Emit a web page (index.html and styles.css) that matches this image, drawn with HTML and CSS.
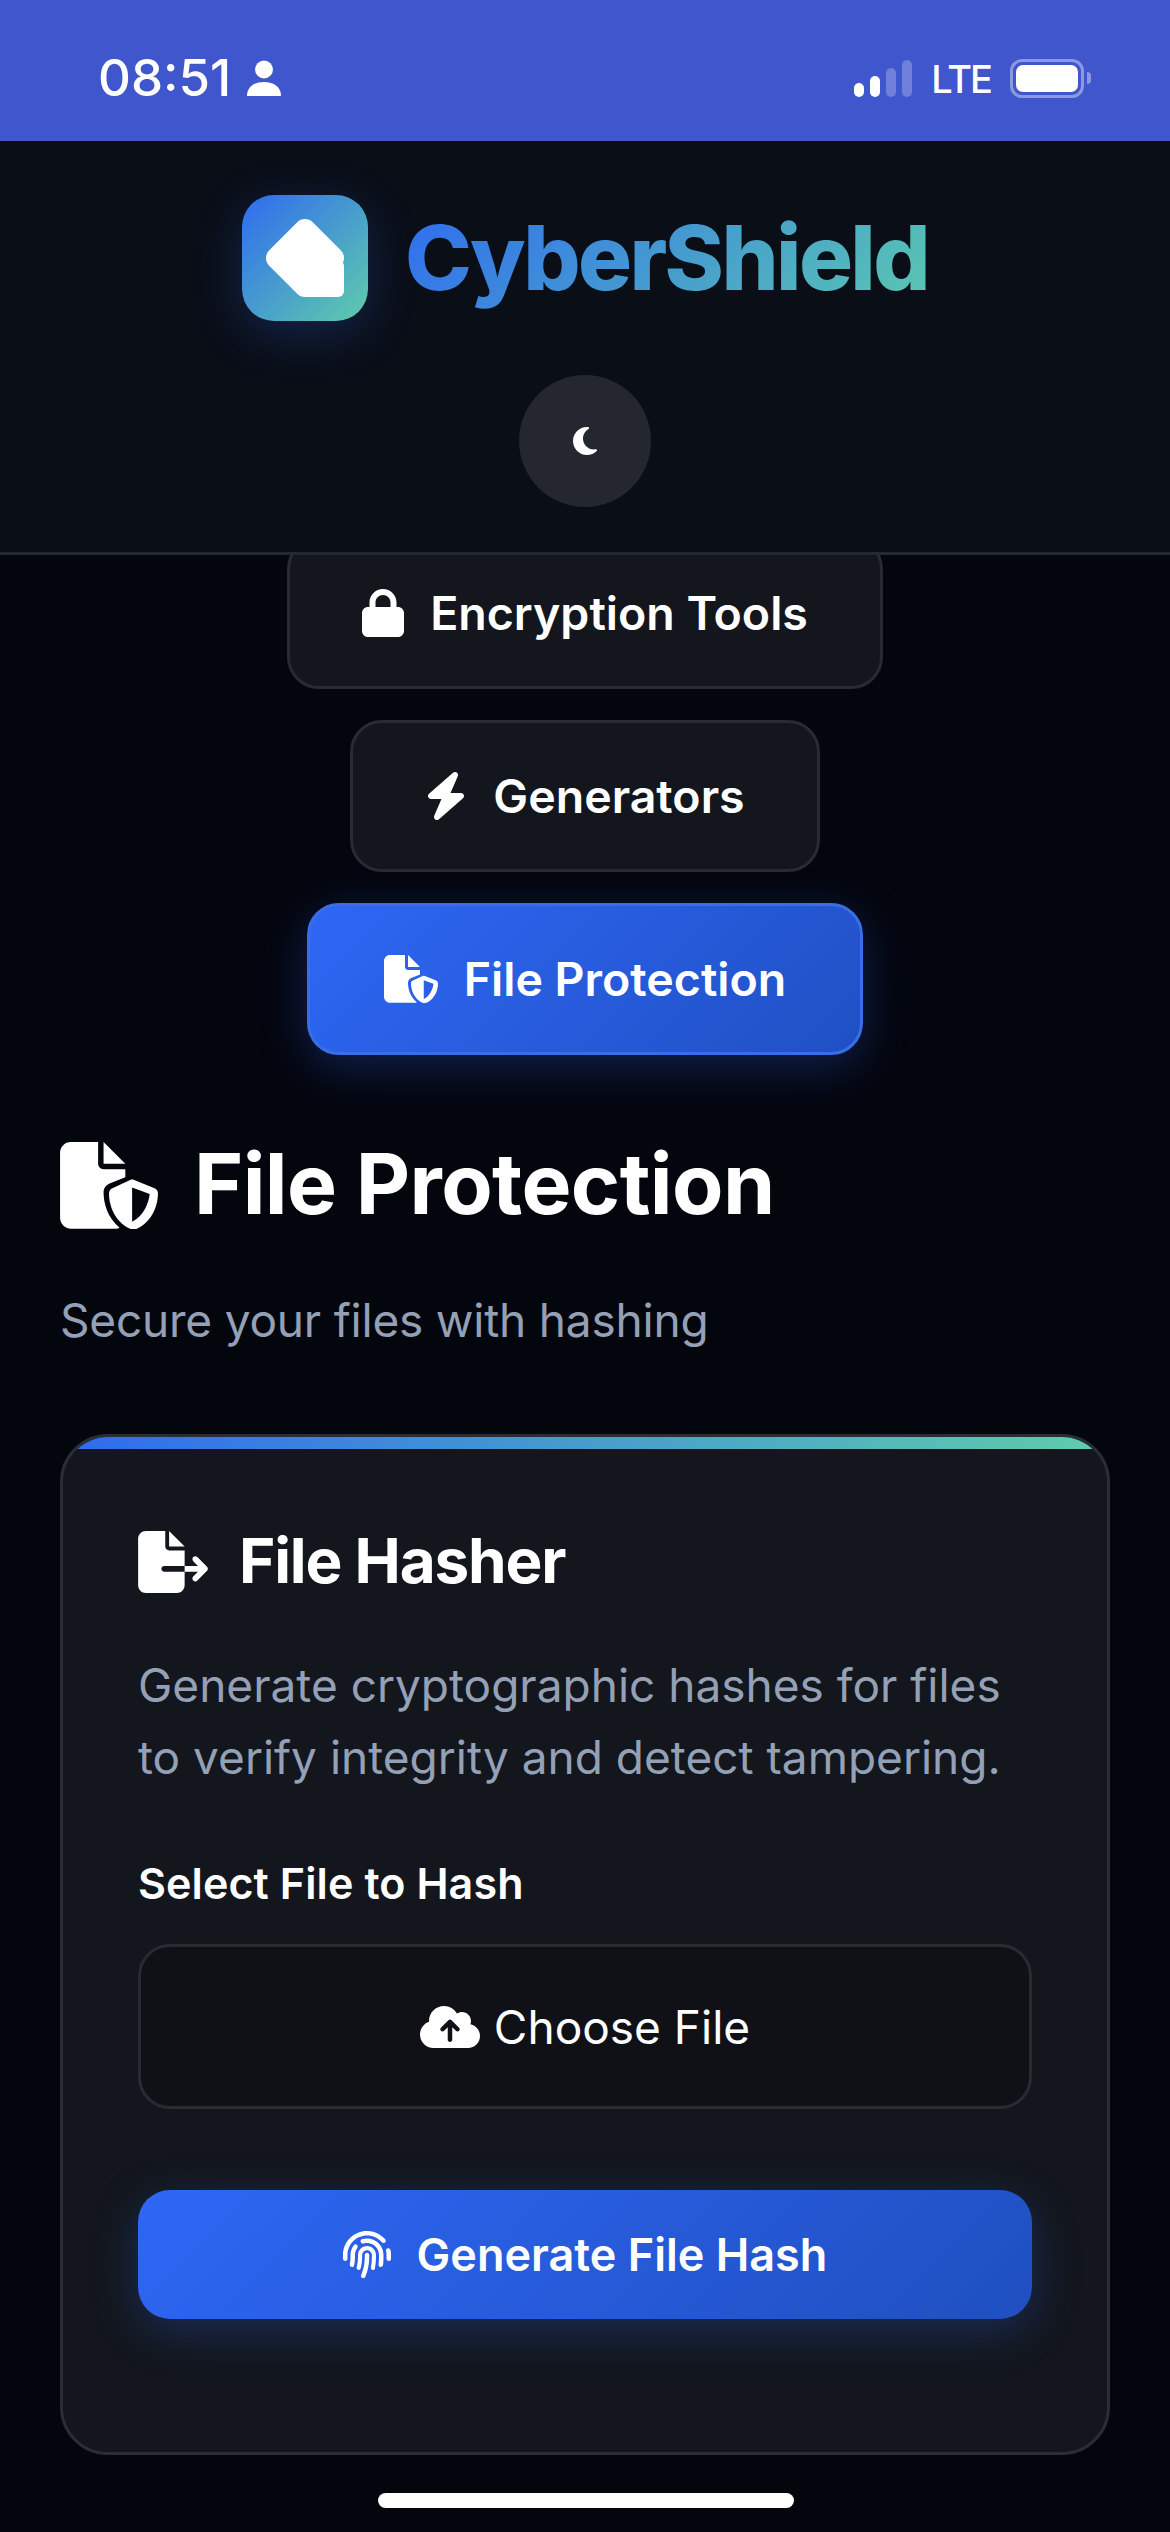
FILE: index.html
```html
<!DOCTYPE html>
<html lang="en">

<head>
    <meta charset="UTF-8">
    <meta name="viewport" content="width=device-width, initial-scale=1.0">
    <title>CyberShield</title>
    <link rel="stylesheet" href="styles.css">
</head>

<body>
    <div class="status-bar">
        <div class="status-left">
            <span class="time">08:51</span>
            <svg class="person" viewBox="0 0 34 36"><circle cx="17" cy="9.5" r="9"/><path d="M0 36c0-9 7-14 17-14s17 5 17 14z"/></svg>
        </div>
        <div class="status-right">
            <div class="signal">
                <span class="bar bar1"></span>
                <span class="bar bar2"></span>
                <span class="bar bar3 dim"></span>
                <span class="bar bar4 dim"></span>
            </div>
            <span class="lte">LTE</span>
            <div class="battery">
                <div class="battery-body"><div class="battery-fill"></div></div>
                <div class="battery-cap"></div>
            </div>
        </div>
    </div>

    <header class="site-header">
        <div class="brand">
            <div class="logo">
                <svg viewBox="0 0 78 78"><path d="M39 11 L67 39 L39 67 L11 39 Z" stroke="#fff" stroke-width="22" stroke-linejoin="round" fill="#fff"/><rect x="36" y="41" width="42" height="37" rx="6" fill="#fff"/></svg>
            </div>
            <span class="brand-name">CyberShield</span>
        </div>
        <button class="theme-toggle">
            <svg viewBox="0 0 384 512"><path d="M223.5 32C100 32 0 132.3 0 256S100 480 223.5 480c60.6 0 115.5-24.2 155.8-63.4c5-4.9 6.3-12.5 3.1-18.7s-10.1-9.7-17-8.5c-9.8 1.7-19.8 2.6-30.1 2.6c-96.9 0-175.5-78.8-175.5-176c0-65.8 36-123.1 89.3-153.3c6.1-3.5 9.2-10.5 7.7-17.3s-7.3-11.9-14.3-12.5c-6.3-.5-12.6-.8-19-.8z"/></svg>
        </button>
    </header>

    <main class="content">
        <nav class="tabs">
            <button class="tab">
                <svg class="tab-icon" viewBox="0 0 448 512"><path d="M144 144v48H304V144c0-44.2-35.8-80-80-80s-80 35.8-80 80zM80 192V144C80 64.5 144.5 0 224 0s144 64.5 144 144v48h16c35.3 0 64 28.7 64 64V448c0 35.3-28.7 64-64 64H64c-35.3 0-64-28.7-64-64V256c0-35.3 28.7-64 64-64H80z"/></svg>
                Encryption Tools
            </button>
            <button class="tab">
                <svg class="tab-icon" viewBox="0 0 448 512"><path d="M349.4 44.6c5.9-13.7 1.5-29.7-10.6-38.5s-28.6-8-39.9 1.8l-256 224c-10 8.8-13.6 22.9-8.9 35.3S50.7 288 64 288H175.5L98.6 467.4c-5.9 13.7-1.5 29.7 10.6 38.5s28.6 8 39.9-1.8l256-224c10-8.8 13.6-22.9 8.9-35.3s-16.6-20.7-30-20.7H272.5L349.4 44.6z"/></svg>
                Generators
            </button>
            <button class="tab active">
                <svg class="tab-icon" viewBox="0 0 576 512"><path fill-rule="evenodd" d="M0 64C0 28.7 28.7 0 64 0H224V128c0 17.7 14.3 32 32 32H384v47l-92.8 37.1c-21.3 8.5-35.2 29.1-35.2 52c0 56.6 18.9 148 94.2 208c-6.4 3-13.200 5.900-20.200 5.900H64c-35.300 0-64-28.700-64-64V64zM384 128H256V0L384 128zM412.400 223.500c7.600-3 16.100-3 23.800 0l120 48C568.100 276.400 576 288 576 301c0 63.300-25.900 168.800-134.800 214.200c-5.900 2.500-12.600 2.500-18.500 0C313.900 469.800 288 364.300 288 301c0-13 7.900-24.600 20-29.500l104.400-48zM424 268V469.500c69.600-36.300 98-112.300 103.400-164L424 268z"/></svg>
                File Protection
            </button>
        </nav>

        <h1 class="page-title">
            <svg class="title-icon" viewBox="0 0 576 512"><path fill-rule="evenodd" d="M0 64C0 28.7 28.7 0 64 0H224V128c0 17.7 14.3 32 32 32H384v47l-92.8 37.1c-21.3 8.5-35.2 29.1-35.2 52c0 56.6 18.9 148 94.2 208c-6.400 3-13.200 5.900-20.200 5.900H64c-35.300 0-64-28.700-64-64V64zM384 128H256V0L384 128zM412.400 223.500c7.600-3 16.100-3 23.800 0l120 48C568.100 276.400 576 288 576 301c0 63.300-25.900 168.800-134.800 214.200c-5.900 2.500-12.600 2.500-18.500 0C313.900 469.800 288 364.300 288 301c0-13 7.900-24.600 20-29.500l104.400-48zM424 268V469.500c69.600-36.300 98-112.300 103.400-164L424 268z"/></svg>
            <span class="title-text">File Protection</span>
        </h1>
        <p class="page-sub">Secure your files with hashing</p>

        <section class="card">
            <div class="card-stripe"></div>
            <div class="card-body">
                <h2 class="card-title">
                    <svg class="card-icon" viewBox="0 0 576 512"><path d="M0 64C0 28.700 28.700 0 64 0H224V128c0 17.700 14.300 32 32 32H384V288H216c-13.300 0-24 10.700-24 24s10.700 24 24 24H384V448c0 35.300-28.700 64-64 64H64c-35.300 0-64-28.700-64-64V64zM384 336V288H494.100l-39-39c-9.400-9.400-9.400-24.600 0-33.900s24.600-9.400 33.900 0l80 80c9.400 9.400 9.400 24.600 0 33.900l-80 80c-9.400 9.400-24.600 9.400-33.900 0s-9.400-24.600 0-33.900l39-39H384zm0-208H256V0L384 128z"/></svg>
                    <span class="title-text">File Hasher</span>
                </h2>
                <p class="card-desc">Generate cryptographic hashes for files to verify integrity and detect tampering.</p>
                <div class="field-label">Select File to Hash</div>
                <div class="file-input">
                    <svg class="cloud" viewBox="0 0 640 512"><path d="M144 480C64.500 480 0 415.500 0 336c0-62.800 40.200-116.200 96.200-135.900c-.1-2.700-.2-5.400-.2-8.100c0-88.400 71.600-160 160-160c59.300 0 111 32.200 138.700 80.200C409.900 102 428.300 96 448 96c53 0 96 43 96 96c0 12.200-2.300 23.800-6.400 34.600C596 238.400 640 290.100 640 352c0 70.700-57.300 128-128 128H144zm79-217c-9.400 9.400-9.400 24.600 0 33.900s24.600 9.400 33.900 0l39-39V392c0 13.300 10.700 24 24 24s24-10.700 24-24V257.900l39 39c9.400 9.400 24.600 9.400 33.900 0s9.400-24.600 0-33.900l-80-80c-9.400-9.400-24.600-9.400-33.900 0l-80 80z"/></svg>
                    Choose File
                </div>
                <button class="primary-btn">
                    <svg class="tab-icon" viewBox="0 0 512 512"><path d="M48 256C48 141.100 141.100 48 256 48c63.100 0 119.600 28.100 157.800 72.500c8.600 10.100 23.800 11.200 33.800 2.600s11.200-23.800 2.600-33.800C403.300 34.600 333.700 0 256 0C114.600 0 0 114.600 0 256v40c0 13.300 10.700 24 24 24s24-10.700 24-24V256zm458.500-52.900c-2.700-13-15.500-21.300-28.400-18.500s-21.300 15.500-18.500 28.400c2.900 13.900 4.500 28.300 4.500 43.100v40c0 13.300 10.700 24 24 24s24-10.700 24-24V256c0-18.100-1.900-35.800-5.500-52.900zM256 80c-19 0-37.400 3-54.500 8.600c-15.200 5-18.700 23.700-8.300 35.900c7.100 8.300 18.800 10.800 29.400 7.900c10.600-2.900 21.800-4.400 33.400-4.400c70.700 0 128 57.300 128 128v24.900c0 25.200-1.500 50.300-4.400 75.300c-1.700 14.600 9.400 27.800 24.200 27.800c11.800 0 21.900-8.600 23.300-20.300c3.300-27.400 5-55 5-82.700V256c0-97.200-78.800-176-176-176zM150.700 148.700c-9.100-10.600-25.300-11.400-33.900-.4C93.700 178 80 215.400 80 256v24.900c0 24.200-2.600 48.300-7.700 71.900C68.800 368.400 80.100 384 96.100 384c10.500 0 19.900-7 22.200-17.300c6.400-28.100 9.700-56.800 9.700-85.800V256c0-27.200 8.500-52.400 22.900-73.100c7.200-10.400 8-24.600-.2-34.200z"/><path d="M256 160c-53 0-96 43-96 96v24.900c0 35.900-4.600 71.500-13.800 106.100c-3.800 14.300 6.700 29 21.500 29c9.500 0 17.900-6.200 20.400-15.400c10.500-39 15.900-79.200 15.900-119.700V256c0-28.700 23.300-52 52-52s52 23.300 52 52v24.900c0 36.300-3.500 72.400-10.400 107.900c-2.700 13.900 7.700 27.200 21.800 27.200c10.200 0 19-7 21-17c7.700-38.800 11.600-78.300 11.600-118.100V256c0-53-43-96-96-96zm24 96c0-13.300-10.700-24-24-24s-24 10.700-24 24v24.900c0 59.900-11 119.300-32.500 175.200l-5.900 15.300c-4.800 12.400 1.400 26.300 13.800 31s26.300-1.400 31-13.800l5.900-15.300C267.900 411.900 280 346.700 280 280.900V256z"/></svg>
                    Generate File Hash
                </button>
            </div>
        </section>
    </main>

    <div class="home-indicator"></div>
</body>

</html>
```

FILE: styles.css
```css
* {
    box-sizing: border-box;
}

body {
    margin: 0;
    width: 1170px;
    height: 2532px;
    position: relative;
    overflow: hidden;
    background-color: #04060e;
    color: #fff;
    font-family: "Inter", "Liberation Sans", sans-serif;
}

svg {
    fill: currentColor;
    flex-shrink: 0;
}

button {
    font-family: inherit;
    color: inherit;
}

/* status bar */
.status-bar {
    height: 141px;
    background-color: #4056cc;
    display: flex;
    justify-content: space-between;
    align-items: flex-start;
    padding: 59px 79px 0 98px;
}

.status-left {
    display: flex;
    align-items: center;
    gap: 16px;
    height: 37px;
}

.time {
    font-size: 51px;
    font-weight: 500;
    line-height: 37px;
}

.person {
    width: 34px;
    height: 36px;
}

.status-right {
    display: flex;
    align-items: flex-end;
    height: 38px;
}

.signal {
    display: flex;
    align-items: flex-end;
    gap: 6px;
    height: 37px;
}

.bar {
    width: 10px;
    border-radius: 5px;
    background-color: #fff;
}

.bar1 { height: 14px; }
.bar2 { height: 21px; }
.bar3 { height: 29px; }
.bar4 { height: 37px; }

.dim {
    opacity: 0.25;
}

.lte {
    margin-left: 19px;
    font-size: 38px;
    font-weight: 500;
    letter-spacing: -2px;
    line-height: 30px;
    margin-bottom: 3px;
}

.battery {
    margin-left: 19px;
    display: flex;
    align-items: center;
    height: 38px;
}

.battery-body {
    width: 74px;
    height: 39px;
    border: 3px solid rgba(255, 255, 255, 0.4);
    border-radius: 12px;
    padding: 3px;
}

.battery-fill {
    height: 100%;
    background-color: #fff;
    border-radius: 7px;
}

.battery-cap {
    width: 4px;
    height: 12px;
    margin-left: 3px;
    background-color: rgba(255, 255, 255, 0.4);
    border-radius: 0 6px 6px 0;
}

/* header */
.site-header {
    background-color: #0a0e17;
    border-bottom: 3px solid #25282f;
    padding: 54px 0 45px;
    display: flex;
    flex-direction: column;
    align-items: center;
    gap: 54px;
    position: relative;
    z-index: 2;
}

.brand {
    display: flex;
    align-items: center;
    gap: 37px;
}

.logo {
    width: 126px;
    height: 126px;
    border-radius: 32px;
    background: linear-gradient(135deg, #2f6bf0, #5fcdab);
    box-shadow: 0 12px 48px rgba(47, 107, 240, 0.25);
    display: flex;
    align-items: center;
    justify-content: center;
}

.logo svg {
    width: 78px;
    height: 78px;
}

.brand-name {
    font-size: 90px;
    font-weight: 800;
    letter-spacing: -2.6px;
    line-height: 126px;
    background: linear-gradient(135deg, #2f6bf0, #5bc9b0);
    -webkit-background-clip: text;
    background-clip: text;
    color: transparent;
}

.theme-toggle {
    width: 132px;
    height: 132px;
    padding: 0;
    border: none;
    border-radius: 50%;
    background-color: #24272f;
    display: flex;
    align-items: center;
    justify-content: center;
}

.theme-toggle svg {
    width: 24px;
    height: 32px;
}

/* content */
.content {
    padding: 0 60px;
}

.tabs {
    margin-top: -18px;
    display: flex;
    flex-direction: column;
    align-items: center;
    gap: 31px;
}

.tab {
    height: 152px;
    padding: 0 72px;
    display: inline-flex;
    align-items: center;
    gap: 26px;
    background-color: #13161c;
    border: 3px solid #282b32;
    border-radius: 32px;
    font-size: 46.5px;
    font-weight: 600;
}

.tab.active {
    padding: 0 74px;
    background: linear-gradient(135deg, #2e67f5, #2050c4);
    border-color: #3a6ee8;
    box-shadow: 0 12px 48px rgba(46, 103, 245, 0.28);
}

.tab-icon {
    height: 48px;
    width: auto;
}

.page-title {
    margin: 87px 0 0;
    height: 87px;
    display: flex;
    align-items: center;
    gap: 36px;
    font-size: 84px;
    font-weight: 700;
    letter-spacing: -0.6px;
    line-height: 87px;
}

.title-text {
    margin-bottom: 4px;
}

.title-icon {
    width: 98px;
    height: 87px;
}

.page-sub {
    margin: 55px 0 0;
    font-size: 46px;
    letter-spacing: -0.2px;
    line-height: 72px;
    color: #94a0b5;
}

.card {
    margin-top: 78px;
    width: 1050px;
    height: 1021px;
    background-color: #13161c;
    border: 3px solid #2a2d34;
    border-radius: 48px;
    overflow: hidden;
}

.card-stripe {
    height: 12px;
    background: linear-gradient(90deg, #2f6bf0, #5fcdab);
}

.card-body {
    padding: 82px 75px 0;
}

.card-title {
    margin: 0;
    height: 62px;
    display: flex;
    align-items: center;
    gap: 31px;
    font-size: 62px;
    font-weight: 700;
    letter-spacing: -1.2px;
}

.card-icon {
    width: 70px;
    height: 62px;
}

.card-desc {
    margin: 56px 0 0;
    font-size: 46px;
    line-height: 72px;
    color: #94a0b5;
}

.field-label {
    margin-top: 61px;
    font-size: 43px;
    font-weight: 600;
    letter-spacing: 0.1px;
    line-height: 58px;
}

.file-input {
    margin-top: 32px;
    height: 165px;
    display: flex;
    align-items: center;
    justify-content: center;
    gap: 14px;
    background-color: #0f1116;
    border: 3px solid #282b32;
    border-radius: 32px;
    font-size: 46px;
}

.cloud {
    width: 60px;
    height: 48px;
}

.primary-btn {
    margin-top: 81px;
    width: 100%;
    height: 129px;
    display: flex;
    align-items: center;
    justify-content: center;
    gap: 26px;
    border: none;
    border-radius: 32px;
    background: linear-gradient(135deg, #2e67f5, #1f4fc0);
    box-shadow: 0 12px 48px rgba(46, 103, 245, 0.28);
    font-size: 45px;
    font-weight: 600;
}

.home-indicator {
    position: absolute;
    left: 378px;
    bottom: 24px;
    width: 416px;
    height: 15px;
    background-color: #fff;
    border-radius: 8px;
}
```
